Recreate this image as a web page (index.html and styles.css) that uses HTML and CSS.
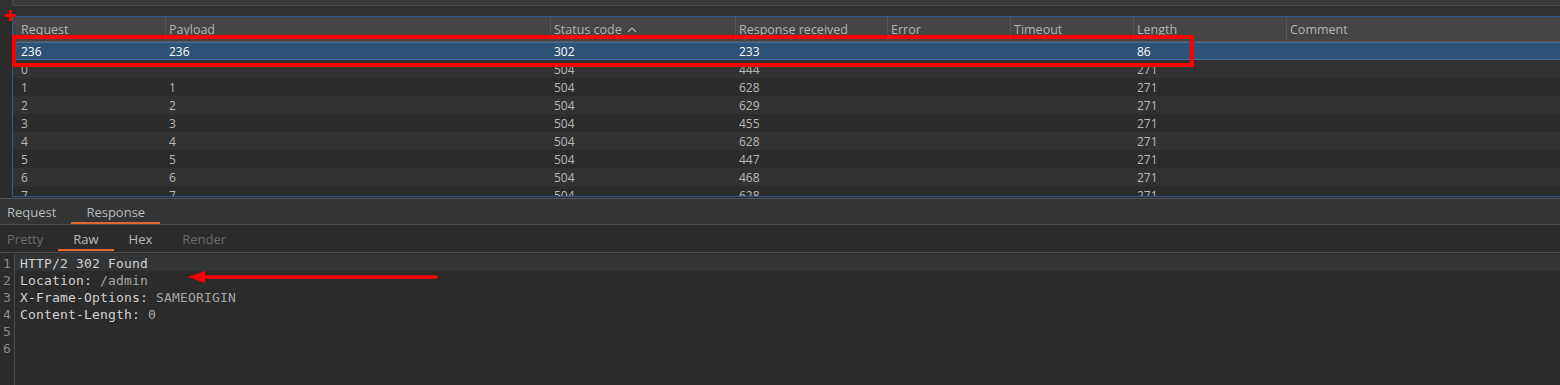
FILE: index.html
```html
<!DOCTYPE html>
<html lang="en">
  <head>
    <meta charset="UTF-8" />
    <title>Intruder results</title>
    <link rel="stylesheet" href="styles.css">
  </head>
  <body>
    <div class="window">
      <div class="top-strip">
        <div class="filter-field"></div>
      </div>

      <div class="results">
        <div class="row head">
          <div class="cell">Request</div>
          <div class="cell">Payload</div>
          <div class="cell">Status code
            <svg class="sort" width="10" height="8" viewBox="0 0 10 8">
              <path d="M1 6 L5 2 L9 6" fill="none" stroke="#b5b5b5" stroke-width="1.2" />
            </svg>
          </div>
          <div class="cell">Response received</div>
          <div class="cell">Error</div>
          <div class="cell">Timeout</div>
          <div class="cell">Length</div>
          <div class="cell">Comment</div>
        </div>
        <div class="row selected">
          <div class="cell">236</div><div class="cell">236</div><div class="cell">302</div><div class="cell">233</div>
          <div class="cell"></div><div class="cell"></div><div class="cell">86</div><div class="cell"></div>
        </div>
        <div class="row light">
          <div class="cell">0</div><div class="cell"></div><div class="cell">504</div><div class="cell">444</div>
          <div class="cell"></div><div class="cell"></div><div class="cell">271</div><div class="cell"></div>
        </div>
        <div class="row">
          <div class="cell">1</div><div class="cell">1</div><div class="cell">504</div><div class="cell">628</div>
          <div class="cell"></div><div class="cell"></div><div class="cell">271</div><div class="cell"></div>
        </div>
        <div class="row light">
          <div class="cell">2</div><div class="cell">2</div><div class="cell">504</div><div class="cell">629</div>
          <div class="cell"></div><div class="cell"></div><div class="cell">271</div><div class="cell"></div>
        </div>
        <div class="row">
          <div class="cell">3</div><div class="cell">3</div><div class="cell">504</div><div class="cell">455</div>
          <div class="cell"></div><div class="cell"></div><div class="cell">271</div><div class="cell"></div>
        </div>
        <div class="row light">
          <div class="cell">4</div><div class="cell">4</div><div class="cell">504</div><div class="cell">628</div>
          <div class="cell"></div><div class="cell"></div><div class="cell">271</div><div class="cell"></div>
        </div>
        <div class="row">
          <div class="cell">5</div><div class="cell">5</div><div class="cell">504</div><div class="cell">447</div>
          <div class="cell"></div><div class="cell"></div><div class="cell">271</div><div class="cell"></div>
        </div>
        <div class="row light">
          <div class="cell">6</div><div class="cell">6</div><div class="cell">504</div><div class="cell">468</div>
          <div class="cell"></div><div class="cell"></div><div class="cell">271</div><div class="cell"></div>
        </div>
        <div class="row">
          <div class="cell">7</div><div class="cell">7</div><div class="cell">504</div><div class="cell">628</div>
          <div class="cell"></div><div class="cell"></div><div class="cell">271</div><div class="cell"></div>
        </div>
      </div>

      <div class="tabs panel-tabs">
        <div class="tab">Request</div>
        <div class="tab active">Response</div>
      </div>

      <div class="tabs view-tabs">
        <div class="tab dim">Pretty</div>
        <div class="tab active">Raw</div>
        <div class="tab">Hex</div>
        <div class="tab dim">Render</div>
      </div>

      <div class="editor">
        <div class="gutter">
          <div>1</div><div>2</div><div>3</div><div>4</div><div>5</div><div>6</div>
        </div>
        <div class="code">
          <div class="line current">HTTP/2 302 Found</div>
          <div class="line">Location: <span class="val">/admin</span></div>
          <div class="line">X-Frame-Options: <span class="val">SAMEORIGIN</span></div>
          <div class="line">Content-Length: <span class="val">0</span></div>
          <div class="line"></div>
          <div class="line"></div>
        </div>
      </div>

      <!-- red markup drawn over the screenshot -->
      <div class="mark-cross"></div>
      <div class="mark-box"></div>
      <svg class="mark-arrow" width="260" height="16" viewBox="0 0 260 16">
        <path d="M14 8 L248 8" stroke="#ff0000" stroke-width="3.5" stroke-linecap="round" />
        <path d="M0 8 L17 2 L17 14 Z" fill="#ff0000" />
      </svg>
    </div>
  </body>
</html>
```

FILE: styles.css
```css
* {
  margin: 0;
  padding: 0;
  box-sizing: border-box;
}

body {
  background-color: #2b2b2b;
  font-family: "Open Sans", "Noto Sans", sans-serif;
  width: 1560px;
  height: 385px;
  overflow: hidden;
}

.window {
  position: relative;
  height: 385px;
  display: flex;
  flex-direction: column;
}

/* top strip with the cut-off filter field */
.top-strip {
  height: 16px;
  background-color: #313131;
}

.filter-field {
  margin-left: 12px;
  height: 6px;
  background-color: #3b3b3b;
  border-bottom: 1px solid #4c4c4c;
  border-left: 1px solid #4c4c4c;
  border-bottom-left-radius: 3px;
}

/* results table */
.results {
  margin-left: 12px;
  height: 181px;
  overflow: hidden;
  border-top: 1px solid #2f5b8a;
  border-left: 1px solid #2f5b8a;
  border-bottom: 1px solid #2f5b8a;
  background-color: #2b2b2b;
}

.row {
  display: grid;
  grid-template-columns: 153px 385px 185px 152px 123px 123px 153px 1fr;
  height: 18px;
  font-size: 12px;
  line-height: 20px;
  color: #b9b9b9;
}

.row.light {
  background-color: #323232;
}

.cell {
  padding-left: 3px;
  white-space: nowrap;
  overflow: hidden;
}

.cell:first-child {
  padding-left: 8px;
}

.row.head {
  height: 25px;
  line-height: 26px;
  background-color: #454545;
  border-bottom: 1px solid #555555;
  color: #b3b3b3;
  font-size: 12.5px;
}

.row.head .cell {
  border-right: 1px solid #555555;
}

.row.head .cell:last-child {
  border-right: none;
}

.sort {
  margin-left: 2px;
  vertical-align: 0;
}

.row.selected {
  background-color: #2d5276;
  color: #ffffff;
  box-shadow: inset 0 1px 0 #3f6d9c, inset 0 -1px 0 #3f6d9c;
}

/* tab bars */
.tabs {
  display: flex;
  font-size: 13px;
  color: #bbbbbb;
}

.tab {
  height: 100%;
  padding: 2px 15px 0;
  position: relative;
}

.tab:first-child {
  padding-left: 7px;
}

.tab.dim {
  color: #6b6b6b;
}

.tab.active::after {
  content: "";
  position: absolute;
  left: 0;
  right: 0;
  bottom: 0;
  height: 2px;
  background-color: #e0692e;
}

.panel-tabs {
  margin-top: 1px;
  height: 27px;
  line-height: 23px;
  background-color: #323436;
  border-top: 1px solid #555555;
  border-bottom: 1px solid #4a4a4a;
}

.view-tabs {
  height: 28px;
  line-height: 25px;
  border-bottom: 1px solid #4a4a4a;
}

.view-tabs .tab.active::after {
  bottom: 1px;
}

/* raw response editor */
.editor {
  flex: 1;
  display: flex;
  padding-top: 1px;
  font-family: "DejaVu Sans Mono", monospace;
  font-size: 13px;
  line-height: 17px;
}

.gutter {
  width: 15px;
  padding-left: 3px;
  padding-top: 1px;
  border-right: 1px solid #4b4b4b;
  color: #8a8a8a;
}

.code {
  flex: 1;
  color: #d2d2d2;
  letter-spacing: 0.17px;
}

.line {
  height: 17px;
  padding-left: 5px;
  padding-top: 1px;
}

.line.current {
  background-color: #323436;
}

.val {
  color: #a6a6a6;
}

/* red annotations */
.mark-box {
  position: absolute;
  left: 12px;
  top: 35px;
  width: 1182px;
  height: 32px;
  border: 4px solid #ff0000;
}

.mark-cross {
  position: absolute;
  left: 5px;
  top: 10px;
  width: 11px;
  height: 11px;
  background:
    linear-gradient(#ff0000, #ff0000) center / 11px 3px no-repeat,
    linear-gradient(#ff0000, #ff0000) center / 3px 11px no-repeat;
}

.mark-arrow {
  position: absolute;
  left: 188px;
  top: 269px;
}
```
